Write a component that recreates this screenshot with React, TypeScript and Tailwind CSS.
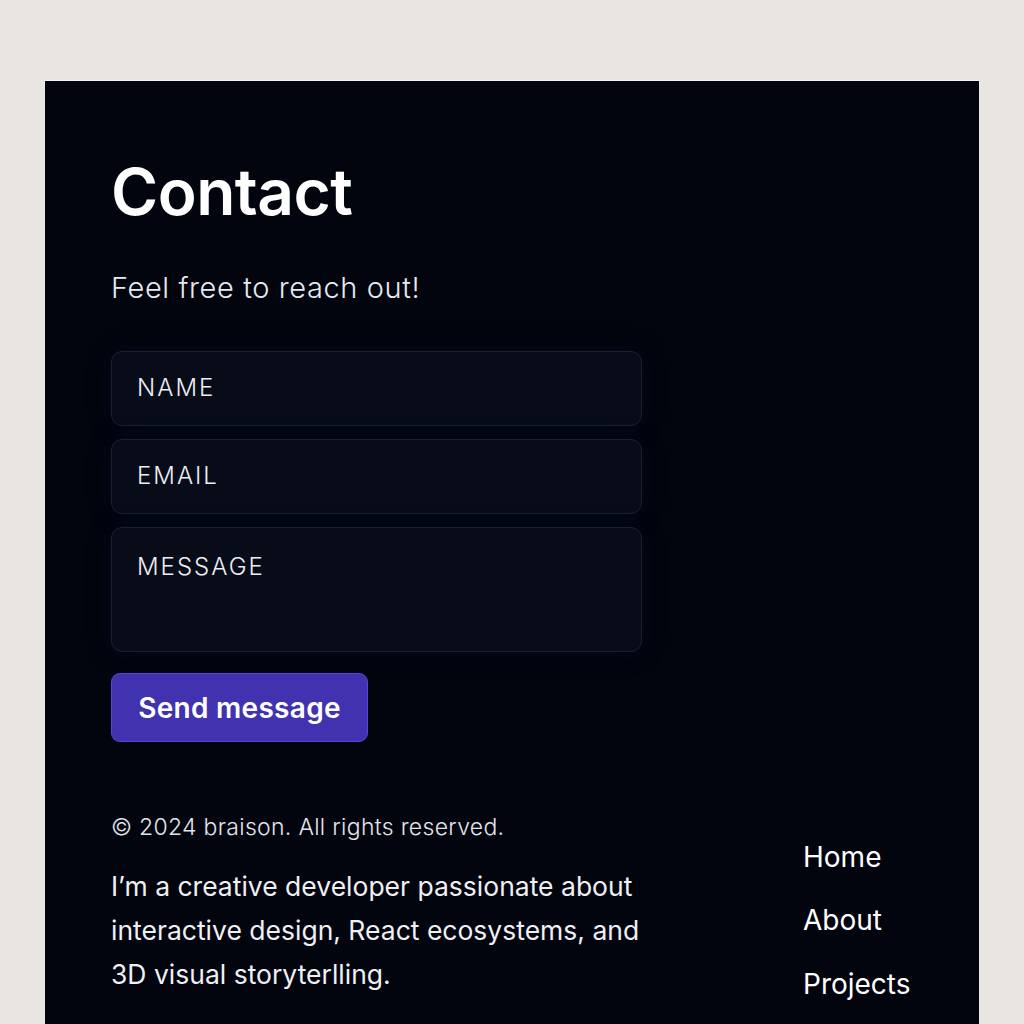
import React from "react";

export default function App() {
  return (
    <div className="min-h-screen bg-[#e8e5e2] pt-[80px] px-[45px]" style={{ fontFamily: "Inter, 'Noto Sans', sans-serif" }}>
      <div className="w-[934px] h-[944px] overflow-hidden bg-[#02040e] border-t border-[#f4f2f0] pt-[79px] px-[66px]">
        <h1 className="text-[64px] leading-none font-semibold text-white tracking-[-0.5px]">Contact</h1>
        <p className="mt-[47px] text-[29px] leading-[1.2] font-light tracking-[0.6px] text-[#e6e9f0]">Feel free to reach out!</p>
        <div className="mt-[45px] w-[531px] flex flex-col gap-[13px]">
          <div className="h-[75px] rounded-[11px] bg-[#080c19] border border-[#1a2031] shadow-[0_0_24px_rgba(20,30,60,0.25)] flex items-center px-[25px]">
            <span className="text-[24px] font-light tracking-[2px] text-[#eceff5]">NAME</span>
          </div>
          <div className="h-[75px] rounded-[11px] bg-[#080c19] border border-[#1a2031] shadow-[0_0_24px_rgba(20,30,60,0.25)] flex items-center px-[25px]">
            <span className="text-[24px] font-light tracking-[2px] text-[#eceff5]">EMAIL</span>
          </div>
          <div className="h-[125px] rounded-[11px] bg-[#080c19] border border-[#1a2031] shadow-[0_0_24px_rgba(20,30,60,0.25)] px-[25px] pt-[21px]">
            <span className="text-[24px] font-light tracking-[2px] text-[#eceff5]">MESSAGE</span>
          </div>
        </div>
        <button className="mt-[21px] w-[257px] h-[69px] rounded-[9px] bg-[#4132b0] border border-[#5646dc] text-white text-[28px] font-semibold tracking-[0.3px] flex items-center justify-center pt-[2px]">
          Send message
        </button>
        <div className="mt-[69px] flex justify-between">
          <div className="w-[560px]">
            <p className="text-[23px] leading-[33px] font-light tracking-[0.3px] text-[#e2e5ec]">© 2024 braison. All rights reserved.</p>
            <p className="mt-[20px] text-[26.5px] leading-[44px] font-normal text-[#eef0f4]">
              I’m a creative developer passionate about interactive design, React ecosystems, and 3D visual storyterlling.
            </p>
          </div>
          <nav className="w-[110px] mt-[27px] flex flex-col gap-[25.5px] text-[28px] leading-[38px] font-normal text-white">
            <span>Home</span>
            <span>About</span>
            <span>Projects</span>
          </nav>
        </div>
      </div>
    </div>
  );
}
